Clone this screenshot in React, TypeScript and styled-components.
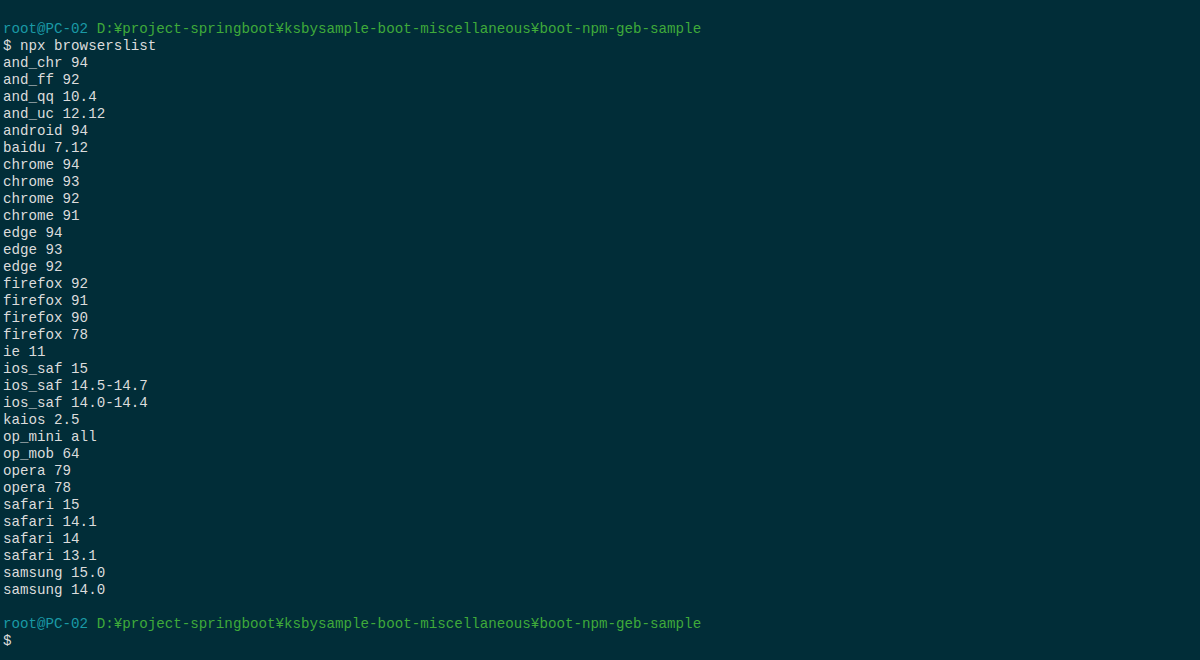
import React from "react";
import styled, { createGlobalStyle } from "styled-components";

const Global = createGlobalStyle`
  html, body { margin: 0; padding: 0; background: #012d38; }
  #root { min-height: 100vh; }
`;

const Terminal = styled.div`
  box-sizing: border-box;
  width: 1200px;
  height: 660px;
  overflow: hidden;
  background: #012d38;
  padding: 21px 0 0 3px;
  font-family: "Liberation Mono", "DejaVu Sans Mono", monospace;
  font-size: 14.2px;
  line-height: 17px;
  color: #dcdcdc;
  white-space: pre;
`;

const Line = styled.div`
  height: 17px;
`;

const User = styled.span`
  color: #1a9aa6;
`;

const Path = styled.span`
  color: #3faa3a;
`;

const items = [
  "and_chr 94",
  "and_ff 92",
  "and_qq 10.4",
  "and_uc 12.12",
  "android 94",
  "baidu 7.12",
  "chrome 94",
  "chrome 93",
  "chrome 92",
  "chrome 91",
  "edge 94",
  "edge 93",
  "edge 92",
  "firefox 92",
  "firefox 91",
  "firefox 90",
  "firefox 78",
  "ie 11",
  "ios_saf 15",
  "ios_saf 14.5-14.7",
  "ios_saf 14.0-14.4",
  "kaios 2.5",
  "op_mini all",
  "op_mob 64",
  "opera 79",
  "opera 78",
  "safari 15",
  "safari 14.1",
  "safari 14",
  "safari 13.1",
  "samsung 15.0",
  "samsung 14.0",
];

const Prompt: React.FC = () => (
  <Line>
    <User>root@PC-02</User> <Path>D:¥project-springboot¥ksbysample-boot-miscellaneous¥boot-npm-geb-sample</Path>
  </Line>
);

export default function App() {
  return (
    <>
      <Global />
      <Terminal>
        <Prompt />
        <Line>$ npx browserslist</Line>
        {items.map((t, i) => (
          <Line key={i}>{t}</Line>
        ))}
        <Line />
        <Prompt />
        <Line>$</Line>
      </Terminal>
    </>
  );
}
